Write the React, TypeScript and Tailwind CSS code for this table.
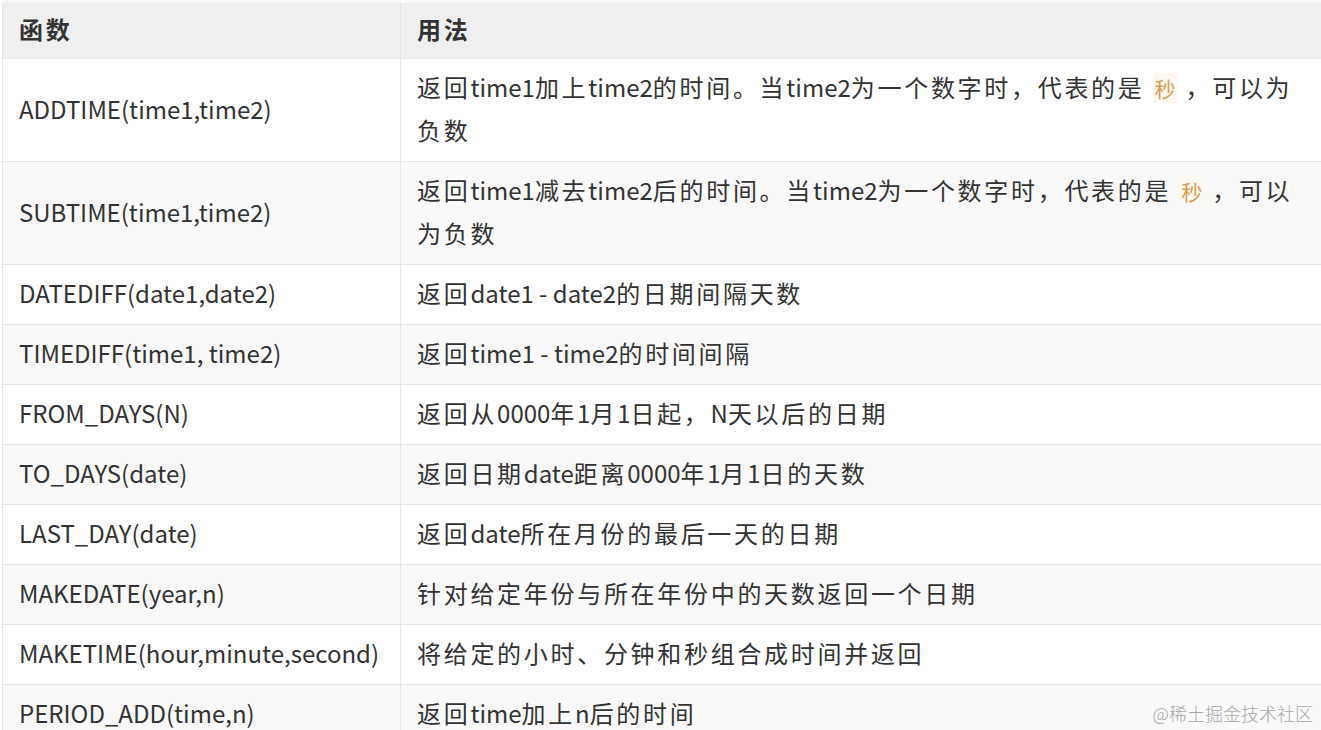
import React from "react";

function T({ s }: { s: string }) {
  const parts = s.split(/([\u3000-\u303f\u3400-\u9fff\uff00-\uffef]+)/);
  return (
    <>
      {parts.map((p, i) =>
        i % 2 === 1 ? (
          <span key={i} className="tracking-[2.7px]">
            {p}
          </span>
        ) : (
          <React.Fragment key={i}>{p}</React.Fragment>
        )
      )}
    </>
  );
}

function Sec() {
  return (
    <code className="mx-[8px] px-[2px] text-[21px] text-[#dc9c52] bg-[#fdf8f1] font-[inherit]">秒</code>
  );
}

const rows: { fn: string; use: React.ReactNode }[] = [
  {
    fn: "ADDTIME(time1,time2)",
    use: (
      <>
        <T s="返回time1加上time2的时间。当time2为一个数字时，代表的是" />
        <Sec />
        <T s="，可以为" />
        <br />
        <T s="负数" />
      </>
    ),
  },
  {
    fn: "SUBTIME(time1,time2)",
    use: (
      <>
        <T s="返回time1减去time2后的时间。当time2为一个数字时，代表的是" />
        <Sec />
        <T s="，可以" />
        <br />
        <T s="为负数" />
      </>
    ),
  },
  { fn: "DATEDIFF(date1,date2)", use: <T s="返回date1 - date2的日期间隔天数" /> },
  { fn: "TIMEDIFF(time1, time2)", use: <T s="返回time1 - time2的时间间隔" /> },
  { fn: "FROM_DAYS(N)", use: <T s="返回从0000年1月1日起，N天以后的日期" /> },
  { fn: "TO_DAYS(date)", use: <T s="返回日期date距离0000年1月1日的天数" /> },
  { fn: "LAST_DAY(date)", use: <T s="返回date所在月份的最后一天的日期" /> },
  { fn: "MAKEDATE(year,n)", use: <T s="针对给定年份与所在年份中的天数返回一个日期" /> },
  { fn: "MAKETIME(hour,minute,second)", use: <T s="将给定的小时、分钟和秒组合成时间并返回" /> },
  { fn: "PERIOD_ADD(time,n)", use: <T s="返回time加上n后的时间" /> },
];

export default function App() {
  return (
    <div
      className="relative w-[1321px] h-[730px] overflow-hidden bg-white pl-[2px] text-[#333333]"
      style={{ fontFamily: '"Noto Sans CJK SC", "Noto Sans", sans-serif' }}
    >
      <table className="w-[1319px] border-collapse table-fixed text-[24px] leading-[41px]">
        <colgroup>
          <col className="w-[398px]" />
          <col />
        </colgroup>
        <thead>
          <tr className="bg-[#efefef] border-t-[3px] border-t-[#f7f7f7]">
            <th className="h-[57px] pb-[4px] text-left font-bold pl-[16px] border-l border-r border-[#e4e4e4]">
              <T s="函数" />
            </th>
            <th className="pb-[4px] text-left font-bold pl-[16px]">
              <T s="用法" />
            </th>
          </tr>
        </thead>
        <tbody>
          {rows.map((r, i) => (
            <tr
              key={i}
              className={`border-t border-[#e6e6e6] ${i % 2 === 1 ? "bg-[#f9f9f9]" : "bg-white"}`}
            >
              <td className="align-middle pt-[7px] pb-[11px] pl-[16px] border-l border-r border-[#e6e6e6] whitespace-nowrap">
                {r.fn}
              </td>
              <td className="align-middle pt-[7px] pb-[11px] pl-[16px] pr-[10px] whitespace-nowrap">{r.use}</td>
            </tr>
          ))}
        </tbody>
      </table>
      <div className="absolute right-[8px] bottom-[5px] text-[18px] leading-[24px] text-[#a8a8a8] font-light">
        @稀土掘金技术社区
      </div>
    </div>
  );
}
